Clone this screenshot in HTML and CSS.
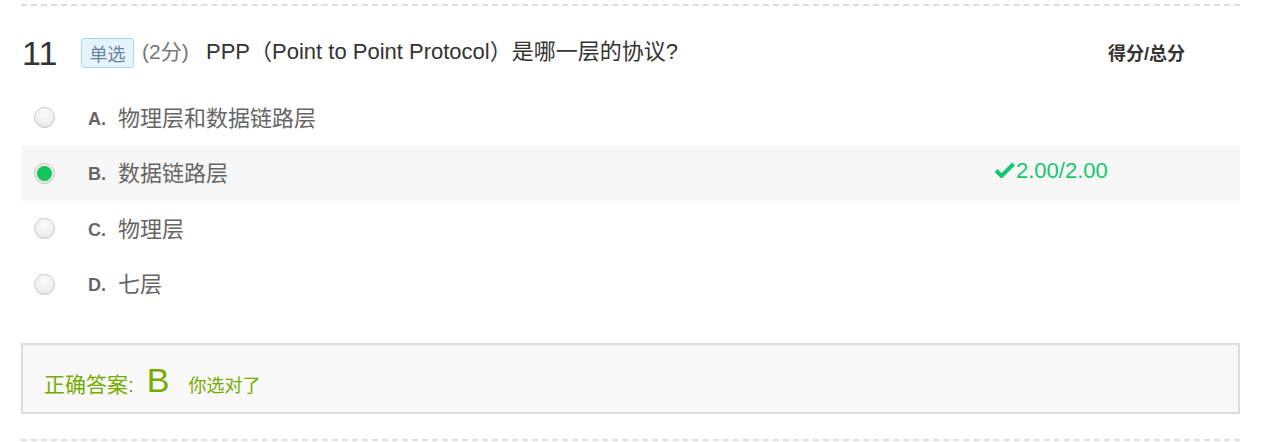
FILE: index.html
```html
<!DOCTYPE html>
<html lang="zh">
<head>
<meta charset="utf-8">
<link rel="stylesheet" href="styles.css">
</head>
<body>
<div class="question">
  <div class="q-head">
    <span class="q-num">11</span>
    <span class="q-tag">单选</span>
    <span class="q-points">(2分)</span>
    <span class="q-title">PPP（Point to Point Protocol）是哪一层的协议?</span>
    <span class="q-score-label">得分/总分</span>
  </div>
  <ul class="options">
    <li class="opt">
      <span class="radio"></span>
      <span class="opt-label"><span class="opt-letter">A.</span><span class="opt-text">物理层和数据链路层</span></span>
    </li>
    <li class="opt opt-chosen">
      <span class="radio radio-on"></span>
      <span class="opt-label"><span class="opt-letter">B.</span><span class="opt-text">数据链路层</span></span>
      <span class="opt-score"><svg class="check" viewBox="0 0 20 16" width="21" height="16"><path d="M1.5 8.5 L7 14 L19 2" fill="none" stroke="currentColor" stroke-width="4" stroke-linejoin="miter"/></svg>2.00/2.00</span>
    </li>
    <li class="opt">
      <span class="radio"></span>
      <span class="opt-label"><span class="opt-letter">C.</span><span class="opt-text">物理层</span></span>
    </li>
    <li class="opt">
      <span class="radio"></span>
      <span class="opt-label"><span class="opt-letter">D.</span><span class="opt-text">七层</span></span>
    </li>
  </ul>
  <div class="answer">
    <span class="ans-label">正确答案:</span>
    <span class="ans-key">B</span>
    <span class="ans-note">你选对了</span>
  </div>
</div>
</body>
</html>
```

FILE: styles.css
```css
html, body {
  margin: 0;
  padding: 0;
  background: #fff;
}
body {
  font-family: "Liberation Sans", Arial, "Noto Sans CJK SC", sans-serif;
  color: #333;
}
.question {
  margin: 4px 21px 0 21px;
  width: 1219px;
  border-top: 2px dashed #ddd;
  border-bottom: 2px dashed #ddd;
  padding-bottom: 25px;
}
.q-head {
  display: flex;
  align-items: center;
  height: 30px;
  margin-top: 32px;
}
.q-num {
  font-size: 34px;
  font-weight: 300;
  color: #333;
  margin-left: 1px;
  width: 59px;
  line-height: 30px;
}
.q-tag {
  box-sizing: border-box;
  height: 30px;
  width: 53px;
  border: 1px solid #a9d8f7;
  background: #e5f3fd;
  border-radius: 3px;
  color: #6a8497;
  font-size: 18px;
  display: flex;
  align-items: center;
  justify-content: center;
}
.q-points {
  font-size: 21px;
  color: #777;
  margin-left: 8px;
  width: 64px;
  margin-bottom: 7px;
}
.q-title {
  font-size: 22px;
  color: #333;
  flex: 1;
  margin-bottom: 8px;
}
.q-score-label {
  font-size: 18px;
  font-weight: bold;
  color: #333;
  margin-right: 55px;
  margin-bottom: 3px;
}
.options {
  list-style: none;
  margin: 22px 0 0 0;
  padding: 0;
}
.opt {
  display: flex;
  align-items: center;
  height: 55.5px;
}
.opt-chosen {
  background: #f7f7f7;
}
.radio {
  box-sizing: border-box;
  width: 21px;
  height: 21px;
  border-radius: 50%;
  margin-left: 13px;
  border: 1px solid #c8c8c8;
  background: radial-gradient(circle at 50% 35%, #fafafa 0%, #f0f0f0 55%, #dedede 100%);
  box-shadow: inset 0 1px 1px #fff;
}
.radio-on {
  border: 1px solid #c4c4c4;
  background: #e6e6e6;
  display: flex;
  align-items: center;
  justify-content: center;
}
.radio-on::after {
  content: "";
  width: 15px;
  height: 15px;
  border-radius: 50%;
  background: #12c45a;
}
.opt-label {
  display: flex;
  align-items: center;
  margin-left: 33px;
  margin-bottom: 4px;
}
.opt-letter {
  font-size: 18px;
  font-weight: bold;
  color: #666;
  width: 30px;
  margin-top: 7px;
}
.opt-text {
  font-size: 22px;
  color: #666;
  width: 876px;
}
.opt-score {
  display: flex;
  align-items: center;
  font-size: 22px;
  color: #15c76f;
  margin-bottom: 4px;
}
.check {
  margin-right: 1px;
  margin-top: -2px;
}
.answer {
  box-sizing: border-box;
  margin-top: 31px;
  height: 71px;
  border: 2px solid #ddd;
  background: #f8f8f8;
  display: flex;
  align-items: baseline;
  padding: 16px 0 0 21px;
  color: #76ab00;
}
.ans-label {
  font-size: 21px;
}
.ans-key {
  font-size: 34px;
  margin-left: 13px;
}
.ans-note {
  font-size: 18px;
  margin-left: 19px;
}
```
